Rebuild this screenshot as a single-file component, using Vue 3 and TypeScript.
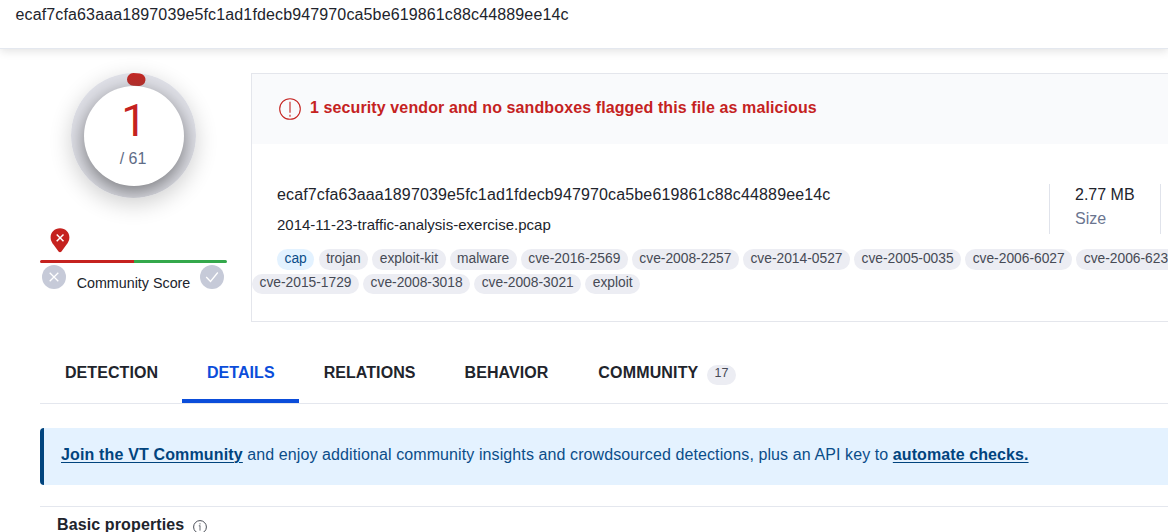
<script setup lang="ts">
interface Tag {
  label: string
  accent?: boolean
}

interface Tab {
  label: string
  active?: boolean
  count?: number
}

const hash = 'ecaf7cfa63aaa1897039e5fc1ad1fdecb947970ca5be619861c88c44889ee14c'

const primaryTags: Tag[] = [
  { label: 'cap', accent: true },
  { label: 'trojan' },
  { label: 'exploit-kit' },
  { label: 'malware' },
  { label: 'cve-2016-2569' },
  { label: 'cve-2008-2257' },
  { label: 'cve-2014-0527' },
  { label: 'cve-2005-0035' },
  { label: 'cve-2006-6027' },
  { label: 'cve-2006-623' },
]

const secondaryTags: Tag[] = [
  { label: 'cve-2015-1729' },
  { label: 'cve-2008-3018' },
  { label: 'cve-2008-3021' },
  { label: 'exploit' },
]

const tabs: Tab[] = [
  { label: 'DETECTION' },
  { label: 'DETAILS', active: true },
  { label: 'RELATIONS' },
  { label: 'BEHAVIOR' },
  { label: 'COMMUNITY', count: 17 },
]
</script>

<template>
  <div class="page">
    <header class="topbar">{{ hash }}</header>

    <main class="content">
      <section class="summary">
        <aside class="score">
          <div class="gauge">
            <div class="ring">
              <div class="dial">
                <div class="positives">1</div>
                <div class="total">/ 61</div>
              </div>
            </div>
            <svg class="arc" width="125" height="125" viewBox="0 0 125 125">
              <defs>
                <linearGradient id="arc-shade" x1="0" y1="0" x2="0" y2="13" gradientUnits="userSpaceOnUse">
                  <stop offset="0" stop-color="#c32622" />
                  <stop offset="1" stop-color="#ac302d" />
                </linearGradient>
              </defs>
              <path d="M62.3 6.4 A56.2 56.2 0 0 1 68.2 6.7" fill="none" stroke="url(#arc-shade)" stroke-width="12.6" stroke-linecap="round" />
            </svg>
          </div>

          <svg class="pin" width="20" height="25" viewBox="0 0 20 25">
            <path d="M10 .3C4.600.3.600 4.300.600 9.400c0 3.100 1.500 5.300 3.200 7.600l4.700 6.400q1.500 1.600 3 0l4.700-6.400c1.700-2.300 3.200-4.500 3.200-7.600C19.400 4.300 15.400.3 10 .3z" fill="#c5221f" />
            <path d="M6.700 6.500l6.800 6.800M13.500 6.500l-6.800 6.800" stroke="#fff" stroke-width="1.500" />
          </svg>
          <div class="meter"><i class="bad"></i><i class="good"></i></div>
          <div class="votes">
            <svg width="24" height="24" viewBox="0 0 24 24">
              <circle cx="12" cy="12" r="12" fill="#c6cad8" />
              <path d="M7.700 7.700l8.600 8.600M16.300 7.700l-8.600 8.600" stroke="#fff" stroke-width="1.300" />
            </svg>
            <span>Community Score</span>
            <svg width="24" height="24" viewBox="0 0 24 24">
              <circle cx="12" cy="12" r="12" fill="#c6cad8" />
              <path d="M6.200 12l4.300 4.500 7.300-9" fill="none" stroke="#fff" stroke-width="1.300" />
            </svg>
          </div>
        </aside>

        <article class="card">
          <div class="verdict">
            <svg width="22" height="22" viewBox="0 0 22 22">
              <circle cx="11" cy="11" r="10.300" fill="none" stroke="#c5221f" stroke-width="1.100" />
              <path d="M11 3.700v11M11 16.700v2" stroke="#c5221f" stroke-width="1.100" />
            </svg>
            <strong>1 security vendor and no sandboxes flagged this file as malicious</strong>
          </div>
          <div class="facts">
            <div class="names">
              <div class="hash">{{ hash }}</div>
              <div class="filename">2014-11-23-traffic-analysis-exercise.pcap</div>
            </div>
            <div class="stat">
              <div class="value">2.77 MB</div>
              <div class="caption">Size</div>
            </div>
          </div>
          <div class="tags first">
            <span v-for="tag in primaryTags" :key="tag.label" class="tag" :class="{ accent: tag.accent }">{{ tag.label }}</span>
          </div>
          <div class="tags second">
            <span v-for="tag in secondaryTags" :key="tag.label" class="tag">{{ tag.label }}</span>
          </div>
        </article>
      </section>

      <nav class="tabs">
        <a v-for="tab in tabs" :key="tab.label" class="tab" :class="{ active: tab.active }">
          <span>{{ tab.label }}</span>
          <span v-if="tab.count" class="count">{{ tab.count }}</span>
        </a>
      </nav>

      <div class="banner">
        <p><a class="join">Join the VT Community</a> <span class="pitch">and enjoy additional community insights and crowdsourced detections, plus an API key to</span> <a class="automate">automate checks.</a></p>
      </div>

      <section class="properties">
        <h2>Basic properties</h2>
        <svg width="14" height="14" viewBox="0 0 14 14">
          <circle cx="7" cy="7" r="6.400" fill="none" stroke="#4a4e57" stroke-width="1" />
          <path d="M7 5.600v5M5.800 5.800h1.400M7 3.200v1.300" fill="none" stroke="#6a6e77" stroke-width="1" />
        </svg>
      </section>
    </main>
  </div>
</template>

<style>
html,
body {
  margin: 0;
  overflow: hidden;
  background: #fff;
}
</style>

<style scoped>
.page {
  width: 1168px;
  height: 532px;
  overflow: hidden;
  font-family: "Liberation Sans", Arial, sans-serif;
  font-size: 16px;
  color: #21242c;
  white-space: nowrap;
}
.topbar {
  height: 43px;
  padding: 5px 15.500px 0;
  line-height: 20px;
  letter-spacing: 0.135px;
  border-bottom: 1px solid #e4e8ef;
  box-shadow: 0 2px 9px rgba(0, 0, 0, 0.12);
}
.content {
  padding: 24px 0 0 40px;
}
.summary {
  display: flex;
  gap: 24px;
  height: 249px;
}
.score {
  width: 187px;
  flex: none;
}
.gauge {
  position: relative;
  width: 125px;
  height: 125px;
  margin-left: 31px;
  border-radius: 50%;
  box-shadow: 0 6px 22px rgba(0, 0, 0, 0.19);
}
.ring {
  box-sizing: border-box;
  width: 125px;
  height: 125px;
  padding: 13px 0 0 13px;
  border-radius: 50%;
  background: #e0e1e8;
  overflow: hidden;
}
.arc {
  position: absolute;
  left: 0;
  top: 0;
}
.dial {
  width: 100px;
  height: 100px;
  border-radius: 50%;
  background: #fff;
  box-shadow: 0 6px 20px rgba(0, 0, 0, 0.48);
  text-align: center;
}
.positives {
  padding-top: 11px;
  height: 49px;
  line-height: 48px;
  font-family: Roboto, "Liberation Sans", sans-serif;
  font-size: 45px;
  color: #c5221f;
}
.total {
  line-height: 26px;
  font-size: 16px;
  color: #606c87;
  text-indent: -2px;
}
.pin {
  display: block;
  margin: 30px 0 0 10.400px;
}
.meter {
  display: flex;
  margin-top: 7px;
  height: 3px;
  border-radius: 1.5px;
  overflow: hidden;
}
.meter i {
  flex: 1;
}
.bad {
  background: #c5221f;
}
.good {
  background: #34a84b;
}
.votes {
  display: flex;
  align-items: flex-start;
  justify-content: space-between;
  margin: 2px 3px 0 2px;
}
.votes span {
  padding: 9px 0 0 1px;
  line-height: 18px;
  font-size: 14.300px;
}
.card {
  box-sizing: border-box;
  flex: 1;
  min-width: 0;
  height: 249px;
  border: solid #e4e6ec;
  border-width: 1px 0 1px 1px;
  overflow: hidden;
}
.verdict {
  display: flex;
  gap: 9px;
  box-sizing: border-box;
  height: 70px;
  padding: 24px 0 0 27px;
  background: #f9fafc;
  color: #c5221f;
}
.verdict strong {
  line-height: 20px;
  font-size: 16px;
  letter-spacing: 0.11px;
}
.facts {
  display: flex;
  justify-content: space-between;
  height: 50px;
  margin: 40px 7px 15px 25px;
}
.hash {
  line-height: 22px;
  letter-spacing: 0.140px;
}
.filename {
  margin-top: 10px;
  line-height: 18px;
  font-size: 15px;
}
.stat {
  box-sizing: border-box;
  width: 112px;
  height: 50px;
  padding-left: 25px;
  border: solid #e0e3eb;
  border-width: 0 1px;
  line-height: 24px;
}
.value {
  height: 23px;
  line-height: 22px;
}
.caption {
  color: #6b7590;
}
.tags {
  display: flex;
  gap: 4.050px;
  margin-bottom: 4px;
}
.tags.first {
  margin-left: 25px;
}
.tag {
  flex: none;
  height: 21px;
  line-height: 19px;
  padding: 0 7.5px;
  border-radius: 11px;
  background: #ecedf3;
  color: #464a55;
  font-size: 13.800px;
}
.tag.accent {
  margin-right: 0.400px;
  background: #e3f2ff;
  color: #0b4d89;
}
.first .tag:last-child {
  padding-right: 15px;
}
.second .tag {
  height: 20px;
  line-height: 17px;
}
.tabs {
  display: flex;
  height: 81px;
  border-bottom: 1px solid #e4e7ee;
}
.tab {
  display: flex;
  box-sizing: border-box;
  height: 81px;
  padding: 41px 24.500px 0;
  line-height: 20px;
  font-weight: 700;
  letter-spacing: 0.070px;
}
.tab:first-child {
  padding: 41px 24.300px 0 25px;
}
.tab:last-child {
  padding-left: 25.500px;
  letter-spacing: 0.160px;
}
.tab.active {
  color: #0b4dda;
  border-bottom: 4px solid #0b4dda;
}
.count {
  height: 20px;
  line-height: 17px;
  margin: 2px 0 0 8.500px;
  padding: 0 7.500px;
  border-radius: 10px;
  background: #ecedf3;
  color: #464a55;
  font-size: 12.500px;
  font-weight: 400;
  letter-spacing: 0;
}
.banner {
  box-sizing: border-box;
  height: 57px;
  margin-top: 24px;
  padding: 17px 0 0 17px;
  border-left: 4px solid #01447e;
  border-radius: 4px 0 0 4px;
  background: #e4f2ff;
  color: #0b4d89;
}
.banner p {
  margin: 0;
  line-height: 20px;
}
.banner a {
  font-weight: 700;
  color: #01447e;
  text-decoration: underline;
  text-decoration-thickness: 1px;
  text-underline-offset: 2px;
}
.join {
  letter-spacing: 0.150px;
}
.pitch {
  letter-spacing: 0.100px;
}
.automate {
  letter-spacing: 0.090px;
}
.properties {
  display: flex;
  gap: 9px;
  height: 26px;
  margin-top: 21px;
  padding-left: 17px;
  border-top: 1px solid #e4e7ee;
  overflow: hidden;
}
.properties h2 {
  margin: 8px 0 0;
  font-size: 16px;
  line-height: 20px;
  letter-spacing: 0.120px;
}
.properties svg {
  margin-top: 13px;
}
</style>
